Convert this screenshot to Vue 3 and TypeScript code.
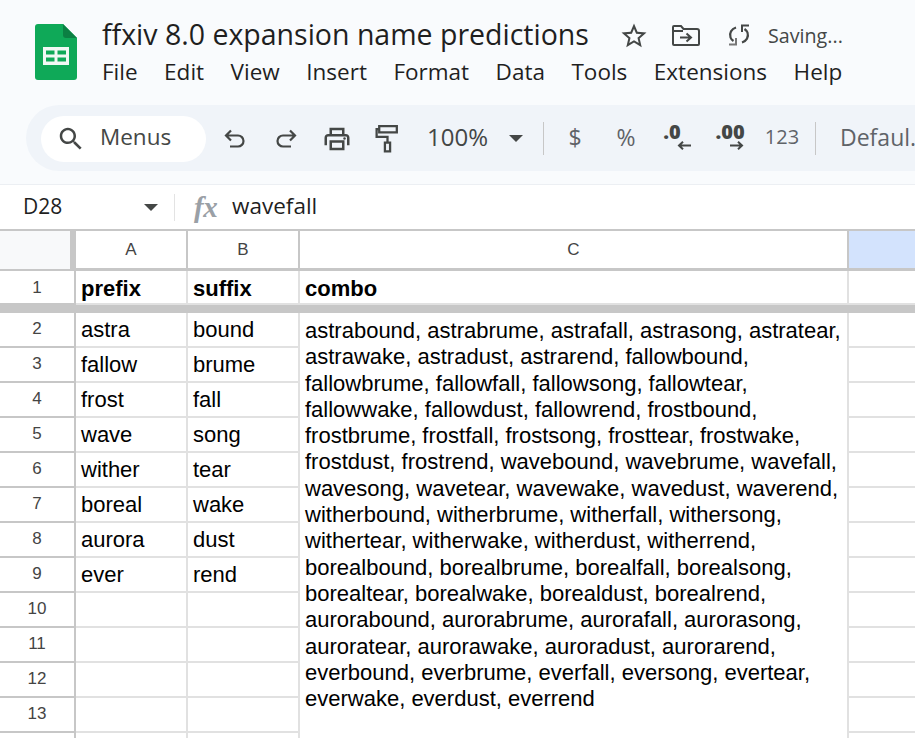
<template>
  <div class="page">
    <header class="top">
      <svg class="logo" viewBox="0 0 42 56" width="42" height="56">
        <path d="M3 0H28L42 14V53a3 3 0 0 1-3 3H3a3 3 0 0 1-3-3V3a3 3 0 0 1 3-3z" fill="#0fa958" />
        <path d="M28 0L42 14H31a3 3 0 0 1-3-3z" fill="#0b8043" />
        <path d="M8 23H34V41H8z" fill="#f1f8f4" />
        <path d="M11 26.5H19.5V30.5H11zM22.500 26.500H31V30.500H22.500zM11 33.500H19.500V37.500H11zM22.500 33.500H31V37.500H22.500z" fill="#0fa958" />
      </svg>
      <div class="doc">
        <div class="title-row">
          <span class="title">ffxiv 8.0 expansion name predictions</span>
          <svg class="star" viewBox="0 0 24 24" width="30" height="30">
            <path d="M22 9.24l-7.19-.62L12 2 9.19 8.630 2 9.240l5.460 4.730L5.820 21 12 17.270 18.180 21l-1.630-7.030L22 9.240zM12 15.400l-3.760 2.270 1-4.280-3.320-2.880 4.380-.38L12 6.100l1.710 4.040 4.380.38-3.320 2.880 1 4.280L12 15.400z" />
          </svg>
          <svg class="move" viewBox="0 0 28 21" width="28" height="21">
            <path d="M1 19V2a1 1 0 0 1 1-1h7l2.500 3H25a2 2 0 0 1 2 2v13a1 1 0 0 1-1 1H2a1 1 0 0 1-1-1z" fill="none" stroke="#444746" stroke-width="2" />
            <path d="M1 6H11" stroke="#444746" stroke-width="2" />
            <path d="M8 12.500H18M14.500 8.500L19 12.500L14.500 16.500" fill="none" stroke="#444746" stroke-width="2" />
          </svg>
          <svg class="sync" viewBox="0 0 24 22" width="24" height="22">
            <path d="M9 3.500C4.500 5 2 9 3.500 13.500C4 15 5 16 6.500 17" fill="none" stroke="#444746" stroke-width="2.200" />
            <path d="M2 20.500H9V14" fill="none" stroke="#777" stroke-width="2" />
            <path d="M15 18.500C19.500 17 22 13 20.500 8.500C20 7 19 6 17.500 5" fill="none" stroke="#444746" stroke-width="2.200" />
            <path d="M22 1.500H15V8" fill="none" stroke="#444746" stroke-width="2" />
          </svg>
          <span class="saving">Saving...</span>
        </div>
        <nav class="menu">
          <span v-for="m in menus" :key="m">{{ m }}</span>
        </nav>
      </div>
    </header>

    <div class="toolbar">
      <div class="search">
        <svg viewBox="0 0 24 24" width="30" height="30">
          <path d="M15.500 14h-.79l-.28-.27C15.410 12.590 16 11.110 16 9.500 16 5.910 13.090 3 9.500 3S3 5.910 3 9.500 5.910 16 9.500 16c1.610 0 3.090-.59 4.230-1.570l.27.28v.79l5 4.990L20.490 19l-4.990-5zm-6 0C7.010 14 5 11.990 5 9.500S7.010 5 9.500 5 14 7.010 14 9.500 11.990 14 9.500 14z" />
        </svg>
        <span class="lift">Menus</span>
      </div>
      <div class="slot first">
        <svg viewBox="0 0 22 20" width="22" height="20" class="line-icon">
          <path d="M7 1.500L2 6.500L7 11.500M2.500 6.500H14a5.500 5.500 0 0 1 0 11H6" />
        </svg>
      </div>
      <div class="slot">
        <svg viewBox="0 0 22 20" width="22" height="20" class="line-icon">
          <path d="M15 1.500L20 6.500L15 11.500M19.500 6.500H8a5.500 5.500 0 0 0 0 11H16" />
        </svg>
      </div>
      <div class="slot">
        <svg viewBox="0 0 24 24" width="30" height="30">
          <path d="M19 8h-1V3H6v5H5c-1.660 0-3 1.340-3 3v6h4v4h12v-4h4v-6c0-1.660-1.340-3-3-3zM8 5h8v3H8V5zm8 14H8v-4h8v4zm2-2v-2h0V13H6v4H4v-6c0-.55.45-1 1-1h14c.55 0 1 .45 1 1v6h-2z" />
          <circle cx="18" cy="11.500" r="1" />
        </svg>
      </div>
      <div class="slot">
        <svg viewBox="0 0 24 28" width="25" height="29" class="line-icon">
          <path d="M4 2H21V8H4zM4 5H1.500V12.500H12V18M9.500 18H14.500V26.500H9.500z" />
        </svg>
      </div>
      <div class="zoom">
        <span class="lift">100%</span>
        <i class="caret"></i>
      </div>
      <i class="divider"></i>
      <div class="slot sym"><span class="lift">$</span></div>
      <div class="slot sym pct"><span class="lift">%</span></div>
      <div class="slot dec">
        <b>.0</b>
        <svg viewBox="0 0 14 9" width="14" height="9" class="arrow left"><path d="M14 4.500H2M6 .8L2 4.500L6 8.200" /></svg>
      </div>
      <div class="slot dec wide">
        <b>.00</b>
        <svg viewBox="0 0 14 9" width="14" height="9" class="arrow right"><path d="M0 4.500H12M8 .8L12 4.500L8 8.200" /></svg>
      </div>
      <div class="num"><span class="lift">123</span></div>
      <i class="divider second"></i>
      <div class="font"><span class="lift">Defaul.</span></div>
    </div>

    <div class="formula">
      <div class="name-box">
        <span class="lift">D28</span>
        <i class="caret small"></i>
      </div>
      <i class="fx-sep"></i>
      <span class="fx">fx</span>
      <span class="value lift">wavefall</span>
    </div>

    <div class="sheet">
      <div class="corner"></div>
      <div v-for="c in ['A', 'B', 'C']" :key="c" class="col-head">{{ c }}</div>
      <div class="col-head selected"></div>

      <div class="row-head first-row">1</div>
      <div class="cell strong">prefix</div>
      <div class="cell strong">suffix</div>
      <div class="cell strong">combo</div>
      <div class="cell last"></div>

      <div class="freeze"></div>

      <div class="combo">{{ combos }}</div>

      <template v-for="(r, i) in rows" :key="i">
        <div class="row-head" :style="{ gridRow: i + 4 }">{{ i < 12 ? i + 2 : '' }}</div>
        <div class="cell" :style="{ gridRow: i + 4 }">{{ r[0] }}</div>
        <div class="cell" :style="{ gridRow: i + 4 }">{{ r[1] }}</div>
        <div class="cell last" :style="{ gridRow: i + 4 }"></div>
      </template>
    </div>
  </div>
</template>

<script setup lang="ts">
const menus = ['File', 'Edit', 'View', 'Insert', 'Format', 'Data', 'Tools', 'Extensions', 'Help']

const prefixes = ['astra', 'fallow', 'frost', 'wave', 'wither', 'boreal', 'aurora', 'ever']
const suffixes = ['bound', 'brume', 'fall', 'song', 'tear', 'wake', 'dust', 'rend']

const rows: string[][] = []
for (let i = 0; i < 13; i++) {
  rows.push([prefixes[i] ?? '', suffixes[i] ?? ''])
}

const combos = prefixes.flatMap((p) => suffixes.map((s) => p + s)).join(', ')
</script>

<style>
html,
body {
  margin: 0;
  height: 738px;
  overflow: hidden;
  background: #fff;
}
</style>

<style scoped>
.page {
  width: 915px;
  height: 738px;
  overflow: hidden;
  display: flex;
  flex-direction: column;
  font-family: "Liberation Sans", Arial, sans-serif;
}

.top {
  height: 105px;
  box-sizing: border-box;
  background: #f9fbfd;
  display: flex;
  padding: 24px 0 0 35px;
}

.logo {
  flex: none;
}

.doc {
  margin-left: 25px;
  margin-top: -10px;
  font-family: "Open Sans", sans-serif;
}

.title-row {
  display: flex;
  align-items: center;
  height: 40px;
  color: #1f1f1f;
  fill: #444746;
}

.title {
  font-size: 28.500px;
  white-space: nowrap;
  width: 517px;
}

.star {
  flex: none;
  margin-top: 4px;
}

.move {
  flex: none;
  margin-left: 23px;
  margin-top: 2px;
}

.sync {
  flex: none;
  margin-left: 27px;
  margin-top: 2px;
}

.saving {
  margin-left: 17px;
  margin-top: 3px;
  font-size: 19.700px;
  color: #444746;
  white-space: nowrap;
}

.menu {
  display: flex;
  gap: 26.500px;
  margin-top: 2px;
  font-size: 22.500px;
  line-height: 32px;
  color: #1f1f1f;
  white-space: nowrap;
}

.toolbar {
  height: 79px;
  box-sizing: border-box;
  background: #f9fbfd;
  display: flex;
  align-items: center;
  padding: 0 0 12px 26px;
  position: relative;
  z-index: 0;
  color: #444746;
  fill: #444746;
  font-family: "Open Sans", sans-serif;
  white-space: nowrap;
}

.toolbar::before {
  content: "";
  position: absolute;
  left: 26px;
  right: 0;
  top: 0;
  height: 66px;
  border-radius: 33px 0 0 33px;
  background: #f0f4f9;
  z-index: -1;
}

.lift {
  display: block;
  margin-top: -4px;
}

.search {
  flex: none;
  width: 165px;
  height: 46px;
  margin-left: 15px;
  box-sizing: border-box;
  padding-left: 15px;
  background: #fff;
  border-radius: 23px;
  display: flex;
  align-items: center;
  gap: 14px;
  font-size: 22.500px;
}

.slot {
  flex: none;
  width: 51px;
  height: 46px;
  display: flex;
  align-items: center;
  justify-content: center;
}

.first {
  margin-left: 3px;
}

.line-icon {
  fill: none;
  stroke: #444746;
  stroke-width: 2.200;
}

.zoom {
  flex: none;
  display: flex;
  align-items: center;
  margin-left: 14px;
  font-size: 24px;
}

.caret {
  display: block;
  width: 0;
  height: 0;
  border-left: 7.500px solid transparent;
  border-right: 7.500px solid transparent;
  border-top: 7.500px solid #444746;
  margin-left: 21px;
}

.divider {
  flex: none;
  width: 1px;
  height: 33px;
  background: #c7c7c7;
  margin-left: 20px;
}

.divider.second {
  margin-left: 12px;
}

.sym {
  margin-left: 6px;
  font-size: 23px;
  color: #5f6368;
  width: 50px;
}

.sym.pct {
  margin-left: 1px;
}

.dec {
  flex-direction: column;
  color: #444746;
  font-weight: 700;
  font-size: 20px;
  line-height: 18px;
  width: 56px;
  padding-bottom: 2px;
  box-sizing: border-box;
}

.dec b {
  display: block;
  margin-top: -2px;
  margin-right: 14px;
}

.dec.wide {
  width: 54px;
}

.dec.wide b {
  margin-right: 8px;
}

.arrow {
  fill: none;
  stroke: #444746;
  stroke-width: 2;
}

.arrow.left {
  margin-left: 10px;
}

.arrow.right {
  margin-left: 6px;
}

.num {
  flex: none;
  width: 42px;
  text-align: center;
  font-size: 20px;
  color: #5f6368;
}

.font {
  margin-left: 24px;
  font-size: 23px;
  color: #5f6368;
}

.formula {
  height: 46px;
  box-sizing: border-box;
  display: flex;
  align-items: center;
  border-top: 1px solid #eceff3;
  background: #fff;
}

.name-box {
  flex: none;
  width: 158px;
  box-sizing: border-box;
  padding-left: 23px;
  display: flex;
  align-items: center;
  justify-content: space-between;
  font-family: "Open Sans", sans-serif;
  font-size: 21px;
  color: #1f1f1f;
}

.caret.small {
  border-left-width: 7px;
  border-right-width: 7px;
  border-top-width: 7px;
  margin: 0;
}

.fx-sep {
  flex: none;
  width: 1px;
  height: 27px;
  margin-left: 16px;
  background: #e3e3e3;
}

.fx {
  width: 38px;
  margin-left: 19px;
  font-family: "Liberation Serif", serif;
  font-style: italic;
  font-weight: 700;
  font-size: 29px;
  color: #9aa0a6;
  letter-spacing: -0.500px;
}

.value {
  font-family: "Open Sans", sans-serif;
  font-size: 22.500px;
  color: #1f1f1f;
}

.sheet {
  flex: 1;
  display: grid;
  grid-template-columns: 76px 112px 112px 549px 1fr;
  grid-template-rows: 40px 34px 8px repeat(13, 35px);
  border-top: 2px solid #c7c7c7;
  margin-top: -1px;
  min-height: 0;
}

.corner {
  box-sizing: border-box;
  background: #f8f9fa;
  border-right: 6px solid #c7c7c7;
  border-bottom: 2px solid #c7c7c7;
}

.col-head {
  box-sizing: border-box;
  display: flex;
  align-items: center;
  justify-content: center;
  font-size: 17px;
  color: #444;
  border-right: 2px solid #c7c7c7;
  border-bottom: 3px solid #c7c7c7;
}

.col-head.selected {
  background: #d3e3fd;
  border-right: none;
}

.row-head {
  grid-column: 1;
  box-sizing: border-box;
  display: flex;
  align-items: center;
  justify-content: center;
  font-size: 17px;
  color: #444;
  border-right: 2px solid #c7c7c7;
  border-bottom: 2px solid #c7c7c7;
  padding-bottom: 2px;
}

.row-head.first-row {
  padding-bottom: 0;
  padding-top: 2px;
}

.cell {
  box-sizing: border-box;
  padding: 1px 0 0 5px;
  display: flex;
  align-items: center;
  font-size: 22px;
  color: #000;
  border-right: 2px solid #e1e1e1;
  border-bottom: 2px solid #e1e1e1;
}

.strong {
  font-weight: 700;
  padding-top: 3px;
}

.last {
  grid-column: 5;
  border-right: none;
}

.freeze {
  grid-column: 1 / -1;
  grid-row: 3;
  background: #c7c7c7;
}

.combo {
  grid-column: 4;
  grid-row: 4 / 17;
  box-sizing: border-box;
  padding: 5px 6px 0 5px;
  font-size: 22px;
  line-height: 26.300px;
  color: #000;
  border-right: 2px solid #e1e1e1;
  background: #fff;
}
</style>
